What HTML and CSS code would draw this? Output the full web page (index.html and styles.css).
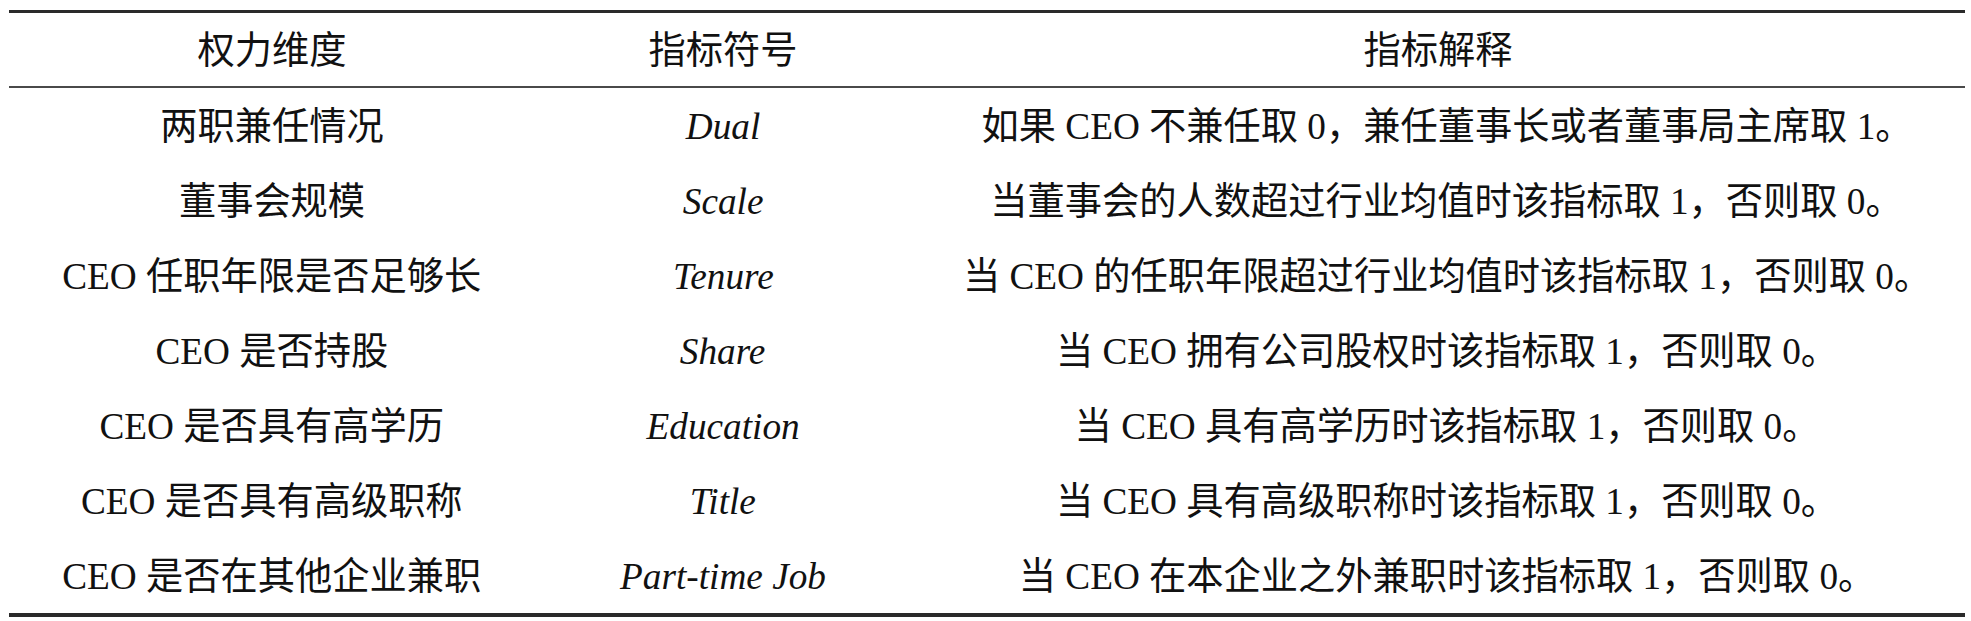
FILE: index.html
```html
<!DOCTYPE html>
<html lang="zh">
<head>
<meta charset="utf-8">
<title>CEO 权力维度指标</title>
<link rel="stylesheet" href="styles.css">
</head>
<body>
<div class="page">
  <div class="table">
    <div class="row head">
      <div class="cell"><span class="t">权力维度</span></div>
      <div class="cell"><span class="t">指标符号</span></div>
      <div class="cell"><span class="t">指标解释</span></div>
    </div>
    <div class="body">
      <div class="row">
        <div class="cell"><span class="t">两职兼任情况</span></div>
        <div class="cell"><span class="t sym">Dual</span></div>
        <div class="cell"><span class="t">如果 CEO 不兼任取 0，兼任董事长或者董事局主席取 1。</span></div>
      </div>
      <div class="row">
        <div class="cell"><span class="t">董事会规模</span></div>
        <div class="cell"><span class="t sym">Scale</span></div>
        <div class="cell"><span class="t">当董事会的人数超过行业均值时该指标取 1，否则取 0。</span></div>
      </div>
      <div class="row">
        <div class="cell"><span class="t">CEO 任职年限是否足够长</span></div>
        <div class="cell"><span class="t sym">Tenure</span></div>
        <div class="cell"><span class="t">当 CEO 的任职年限超过行业均值时该指标取 1，否则取 0。</span></div>
      </div>
      <div class="row">
        <div class="cell"><span class="t">CEO 是否持股</span></div>
        <div class="cell"><span class="t sym">Share</span></div>
        <div class="cell"><span class="t">当 CEO 拥有公司股权时该指标取 1，否则取 0。</span></div>
      </div>
      <div class="row">
        <div class="cell"><span class="t">CEO 是否具有高学历</span></div>
        <div class="cell"><span class="t sym">Education</span></div>
        <div class="cell"><span class="t">当 CEO 具有高学历时该指标取 1，否则取 0。</span></div>
      </div>
      <div class="row">
        <div class="cell"><span class="t">CEO 是否具有高级职称</span></div>
        <div class="cell"><span class="t sym">Title</span></div>
        <div class="cell"><span class="t">当 CEO 具有高级职称时该指标取 1，否则取 0。</span></div>
      </div>
      <div class="row">
        <div class="cell"><span class="t">CEO 是否在其他企业兼职</span></div>
        <div class="cell"><span class="t sym">Part-time Job</span></div>
        <div class="cell"><span class="t">当 CEO 在本企业之外兼职时该指标取 1，否则取 0。</span></div>
      </div>
    </div>
  </div>
</div>
</body>
</html>
```

FILE: styles.css
```css
html, body {
  margin: 0;
  padding: 0;
  background: #ffffff;
}

.page {
  padding: 10px 6px 0 9px;
  font-family: "Liberation Serif", "Noto Sans CJK SC", serif;
  font-size: 38px;
  color: #111111;
}

.table {
  width: 1956px;
  border-top: 3px solid #2a2a2a;
  border-bottom: 4px solid #2a2a2a;
}

.row {
  display: grid;
  grid-template-columns: 526px 376px 1fr;
  height: 75px;
}

.row.head {
  height: 73px;
  border-bottom: 2px solid #4a4a4a;
}

.cell {
  display: flex;
  align-items: center;
  justify-content: center;
  white-space: nowrap;
  line-height: 1;
}

.body .cell:nth-child(3) {
  padding-left: 18px;
}

.t {
  display: inline-block;
  transform: scaleX(0.98);
  transform-origin: center;
}

.sym {
  font-style: italic;
}
```
